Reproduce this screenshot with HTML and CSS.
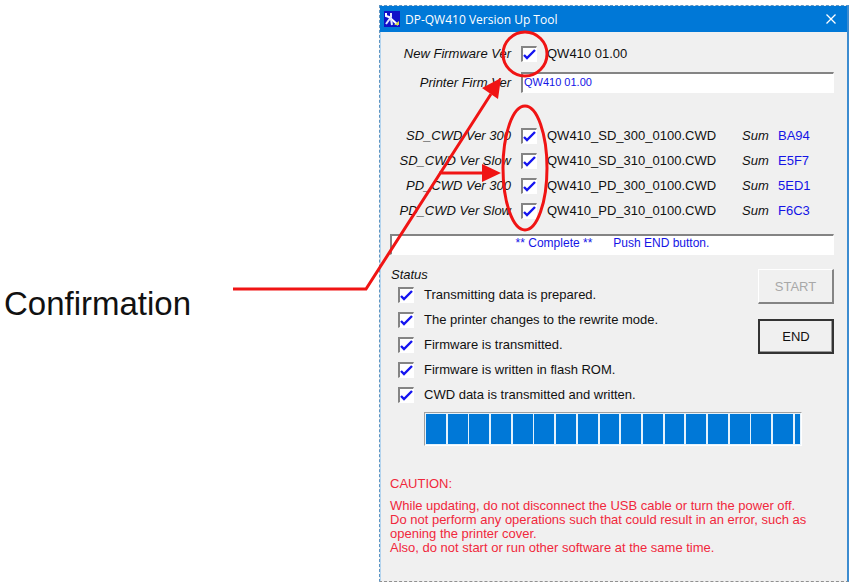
FILE: index.html
```
<!DOCTYPE html>
<html lang="en">

<head>
    <meta charset="UTF-8" />
    <meta name="viewport" content="width=device-width, initial-scale=1.0" />
    <title>DP-QW410 Version Up Tool</title>
    <link rel="stylesheet" href="styles.css">
</head>

<body>
    <main class="page">
        <p class="callout">Confirmation</p>

        <section class="dialog" aria-labelledby="dialog-title">
            <header class="title-bar">
                <svg class="app-icon" viewBox="0 0 16 16" aria-hidden="true">
                    <rect width="16" height="16" fill="#1010c8" />
                    <path d="M2 2v3l3 1 9 8" fill="none" stroke="#fff" stroke-width="2" />
                    <path d="M7 2v4L2 13M7 8l1 6" fill="none" stroke="#dfe6ff" stroke-width="2" />
                    <path d="M10 14h5v-4z" fill="#d8dc50" />
                </svg>
                <h1 id="dialog-title">DP-QW410 Version Up Tool</h1>
                <button class="close" type="button" aria-label="Close">
                    <svg viewBox="0 0 10 10" aria-hidden="true">
                        <path d="M0.5 0.5l9 9M9.5 0.5l-9 9" fill="none" stroke="#fff" stroke-width="1.3" />
                    </svg>
                </button>
            </header>

            <form class="content">
                <div class="row">
                    <label class="name" for="new_firm">New Firmware Ver</label>
                    <input type="checkbox" id="new_firm" checked />
                    <span>QW410 01.00</span>
                </div>
                <div class="row printer">
                    <label class="name" for="printer_firm">Printer Firm Ver</label>
                    <input type="text" id="printer_firm" value="QW410 01.00" readonly />
                </div>

                <div class="cwd-list">
                    <div class="row">
                        <label class="name" for="sd_300">SD_CWD Ver 300</label>
                        <input type="checkbox" id="sd_300" checked />
                        <span>QW410_SD_300_0100.CWD</span>
                        <em>Sum</em>
                        <span class="sum">BA94</span>
                    </div>
                    <div class="row">
                        <label class="name" for="sd_slow">SD_CWD Ver Slow</label>
                        <input type="checkbox" id="sd_slow" checked />
                        <span>QW410_SD_310_0100.CWD</span>
                        <em>Sum</em>
                        <span class="sum">E5F7</span>
                    </div>
                    <div class="row">
                        <label class="name" for="pd_300">PD_CWD Ver 300</label>
                        <input type="checkbox" id="pd_300" checked />
                        <span>QW410_PD_300_0100.CWD</span>
                        <em>Sum</em>
                        <span class="sum">5ED1</span>
                    </div>
                    <div class="row">
                        <label class="name" for="pd_slow">PD_CWD Ver Slow</label>
                        <input type="checkbox" id="pd_slow" checked />
                        <span>QW410_PD_310_0100.CWD</span>
                        <em>Sum</em>
                        <span class="sum">F6C3</span>
                    </div>
                </div>

                <output class="message">
                    <span>** Complete **</span>
                    <span>Push END button.</span>
                </output>

                <div class="lower">
                    <fieldset class="status">
                        <legend>Status</legend>
                        <label><input type="checkbox" checked />Transmitting data is prepared.</label>
                        <label><input type="checkbox" checked />The printer changes to the rewrite mode.</label>
                        <label><input type="checkbox" checked />Firmware is transmitted.</label>
                        <label><input type="checkbox" checked />Firmware is written in flash ROM.</label>
                        <label><input type="checkbox" checked />CWD data is transmitted and written.</label>
                    </fieldset>
                    <div class="buttons">
                        <button type="button" disabled>START</button>
                        <button type="button" class="default">END</button>
                    </div>
                </div>

                <progress value="100" max="100" aria-label="Update progress"></progress>

                <div class="caution">
                    <h2>CAUTION:</h2>
                    <p>While updating, do not disconnect the USB cable or turn the power off.</p>
                    <p>Do not perform any operations such that could result in an error, such as opening the printer cover.</p>
                    <p>Also, do not start or run other software at the same time.</p>
                </div>
            </form>

            <!-- leader line and rings that point out the check marks -->
            <svg class="marks" viewBox="0 0 320 300" aria-hidden="true">
                <path d="M0 283H133L258 88M206 167H252" />
                <ellipse cx="292" cy="48" rx="22" ry="22" />
                <ellipse cx="292" cy="162" rx="22" ry="62" />
                <path class="head" d="M268 72L249 82L265 93ZM268 167L249 158V176Z" />
            </svg>
        </section>
    </main>
</body>

</html>
```

FILE: styles.css
```
:root {
    --face: #f0f0f0;
    --blue: #0078d7;
    --value: #1414e6;
    --mark: #f01414;
    --shadow: #848484;
}

* {
    box-sizing: border-box;
}

body {
    margin: 0;
    background: #fff;
    color: #111;
    font-family: "Liberation Sans", Arial, sans-serif;
    font-size: 13px;
    line-height: 15px;
}

h1,
h2,
p {
    margin: 0;
    font-weight: normal;
}

.page {
    display: grid;
    grid-template-columns: 1fr minmax(470px, 55%);
    align-items: center;
    padding: 5px 5px 6px 4px;
}

.callout {
    padding-top: 20px;
    font-size: 33px;
    line-height: 40px;
}

.dialog {
    position: relative;
    background: var(--face);
    border: 1px dashed #5b94c4;
    border-right: 2px solid #3c8cd0;
    border-bottom-color: #909090;
}

/* Title bar */
.title-bar {
    display: flex;
    align-items: center;
    gap: 5px;
    height: 26px;
    padding: 0 11px 0 4px;
    background: var(--blue);
    color: #fff;
}

.app-icon {
    width: 16px;
    height: 16px;
}

.title-bar h1 {
    flex: 1;
    font-family: "Open Sans", "Noto Sans", sans-serif;
    font-size: 12px;
}

.close {
    display: flex;
    padding: 0;
    background: none;
    border: none;
}

.close svg {
    width: 10px;
    height: 10px;
}

/* Form */
.content {
    padding: 9px 13px 26px 9px;
    border-left: 1px solid #b4d4ee;
}

.row {
    display: grid;
    grid-template-columns: 121px 16px 185px 26px 1fr;
    align-items: center;
    column-gap: 10px;
    min-height: 25px;
}

.printer {
    margin-top: 4px;
}

.name {
    text-align: right;
    font-style: italic;
    white-space: nowrap;
}

.sum {
    color: var(--value);
}

input[type="checkbox"] {
    appearance: none;
    flex: none;
    width: 16px;
    height: 16px;
    margin: 0;
    border: 1px solid #fff;
    border-top: 2px solid var(--shadow);
    border-left: 2px solid var(--shadow);
    background: #fff;
}

input[type="checkbox"]:checked {
    background: #fff url("data:image/svg+xml,%3Csvg xmlns='http://www.w3.org/2000/svg' viewBox='0 0 13 13'%3E%3Cpath d='M1 7l3 3 8-8' fill='none' stroke='%231414f0' stroke-width='2.4'/%3E%3C/svg%3E") center / 13px 13px no-repeat;
}

input[type="text"] {
    grid-column: 2 / -1;
    width: 100%;
    height: 21px;
    padding: 0 1px 3px;
    border: 1px solid #fff;
    border-top: 2px solid var(--shadow);
    border-left: 2px solid var(--shadow);
    background: #fff;
    color: var(--value);
    font-family: inherit;
    font-size: 11px;
}

.cwd-list {
    margin-top: 28px;
}

.message {
    display: flex;
    justify-content: center;
    gap: 21px;
    height: 21px;
    margin-top: 11px;
    border: 1px solid #fff;
    border-top: 2px solid var(--shadow);
    border-left: 2px solid var(--shadow);
    background: #fff;
    color: var(--value);
    font-size: 12px;
}

/* Status */
.lower {
    display: flex;
    justify-content: space-between;
    margin-top: 12px;
}

.status {
    margin: 0;
    padding: 0;
    border: none;
}

.status legend {
    padding: 0 1px;
    font-style: italic;
}

.status label {
    display: flex;
    align-items: center;
    gap: 10px;
    height: 25px;
    padding-left: 8px;
}

.buttons {
    display: flex;
    flex-direction: column;
    gap: 15px;
    padding-top: 2px;
}

.buttons button {
    width: 76px;
    height: 35px;
    padding: 0;
    border: 1px solid #fff;
    border-right: 2px solid var(--shadow);
    border-bottom: 2px solid var(--shadow);
    background: var(--face);
    color: #111;
    font-family: inherit;
    font-size: 13px;
}

.buttons button:disabled {
    color: #a8a8a8;
}

.buttons .default {
    border: 2px solid #333;
    box-shadow: inset -1px -1px 0 #999;
}

/* Progress bar */
progress {
    appearance: none;
    display: block;
    width: calc(100% - 66px);
    height: 34px;
    margin: 5px 0 0 34px;
    padding: 1px;
    border: 1px solid #fff;
    border-top-color: #a0a0a0;
    border-left-color: #a0a0a0;
    background: #e4f2fc;
}

progress::-webkit-progress-bar {
    background: #e4f2fc;
}

/* 17 full blocks and the start of an 18th */
progress::-webkit-progress-value {
    background: repeating-linear-gradient(to right, var(--blue) 0 5.3%, #e4f2fc 5.3% 5.8%);
}

.caution {
    margin-top: 31px;
    color: #f0283c;
    line-height: 14px;
}

.caution h2 {
    margin-bottom: 8px;
    font-size: 13px;
}

.marks {
    position: absolute;
    top: 0;
    left: -147px;
    width: 320px;
    height: 300px;
    fill: none;
    stroke: var(--mark);
    stroke-width: 3;
    pointer-events: none;
}

.marks .head {
    fill: var(--mark);
    stroke: none;
}
```
